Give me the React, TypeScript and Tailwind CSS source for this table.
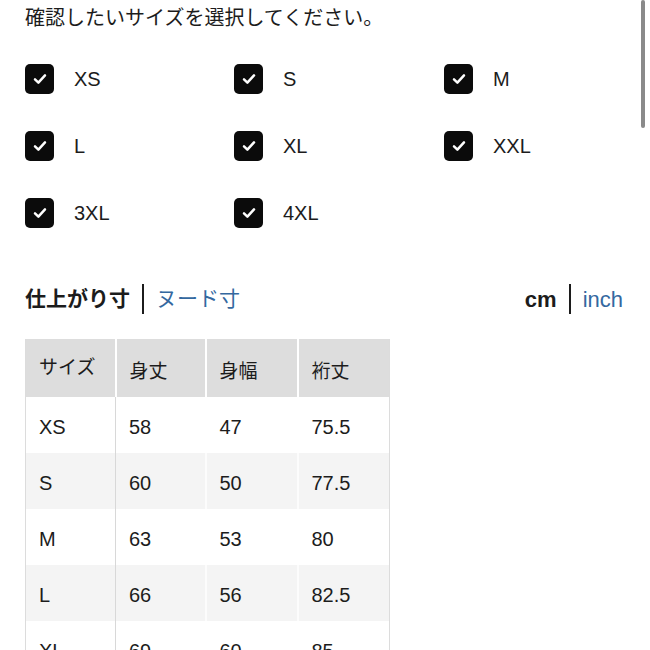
import type { ReactNode } from "react";

const SIZES = ["XS", "S", "M", "L", "XL", "XXL", "3XL", "4XL"];

const ROWS: [string, string, string, string][] = [
  ["XS", "58", "47", "75.5"],
  ["S", "60", "50", "77.5"],
  ["M", "63", "53", "80"],
  ["L", "66", "56", "82.5"],
  ["XL", "69", "60", "85"],
];

const FONT = { fontFamily: '"Liberation Sans", "Noto Sans CJK JP", sans-serif' };

function Check() {
  return (
    <div className="flex h-[30px] w-[29px] items-center justify-center rounded-[5px] bg-[#0b0b0b]">
      <svg width="14" height="12" viewBox="0 0 14 12" fill="none">
        <path d="M2 6.3 L5.4 9.6 L12 2.4" stroke="white" strokeWidth="2.5" strokeLinecap="round" strokeLinejoin="round" />
      </svg>
    </div>
  );
}

function Cell({ children, first, head }: { children: ReactNode; first?: boolean; head?: boolean }) {
  return (
    <td
      className={
        head
          ? "border-r-2 border-white pl-[13px] align-middle text-[19px] last:border-r-0"
          : first
            ? "border-r border-[#d8d8d8] pl-[13px] pt-[4px] align-middle text-[20px]"
            : "border-r-2 border-white/70 pl-[13px] pt-[4px] align-middle text-[20px] last:border-r-0"
      }
    >
      {children}
    </td>
  );
}

export default function App() {
  return (
    <div className="relative h-[650px] w-[650px] overflow-hidden bg-white pl-[25px] text-[#1c1c1c]" style={FONT}>
      {/* scroll indicator */}
      <div className="absolute right-[5px] top-0 h-[128px] w-[4px] rounded-full bg-[#8a8a8a]" />

      <div className="pt-[4px] text-[20px] leading-[28px]">確認したいサイズを選択してください。</div>

      <div className="mt-[32px] grid grid-cols-[209px_210px_160px] gap-y-[37px]">
        {SIZES.map((s) => (
          <div key={s} className="flex h-[30px] items-center gap-[20px]">
            <Check />
            <span className="text-[20px] leading-none">{s}</span>
          </div>
        ))}
      </div>

      <div className="mt-[56px] flex h-[30px] items-center pr-[27px]">
        <span className="text-[21px] font-bold">仕上がり寸</span>
        <span className="mx-[12px] h-[30px] w-[2px] bg-[#1c1c1c]" />
        <span className="text-[21px] text-[#34689f]">ヌード寸</span>
        <span className="ml-auto text-[22px] font-bold">cm</span>
        <span className="mx-[12px] h-[30px] w-[2px] bg-[#1c1c1c]" />
        <span className="text-[22px] text-[#34689f]">inch</span>
      </div>

      <table className="mt-[25px] w-[364px] table-fixed border-collapse border-x border-[#dcdcdc]">
        <colgroup>
          <col className="w-[90px]" />
          <col className="w-[90px]" />
          <col className="w-[92px]" />
          <col className="w-[92px]" />
        </colgroup>
        <thead>
          <tr className="h-[58px] bg-[#dddddd]">
            <Cell head>サイズ</Cell>
            <Cell head>
              <span className="relative top-[4px]">身丈</span>
            </Cell>
            <Cell head>
              <span className="relative top-[4px]">身幅</span>
            </Cell>
            <Cell head>
              <span className="relative top-[4px]">裄丈</span>
            </Cell>
          </tr>
        </thead>
        <tbody>
          {ROWS.map((r, i) => (
            <tr key={r[0]} className={i % 2 === 0 ? "h-[56px] bg-white" : "h-[56px] bg-[#f4f4f4]"}>
              <Cell first>{r[0]}</Cell>
              <Cell>{r[1]}</Cell>
              <Cell>{r[2]}</Cell>
              <Cell>{r[3]}</Cell>
            </tr>
          ))}
        </tbody>
      </table>
    </div>
  );
}
